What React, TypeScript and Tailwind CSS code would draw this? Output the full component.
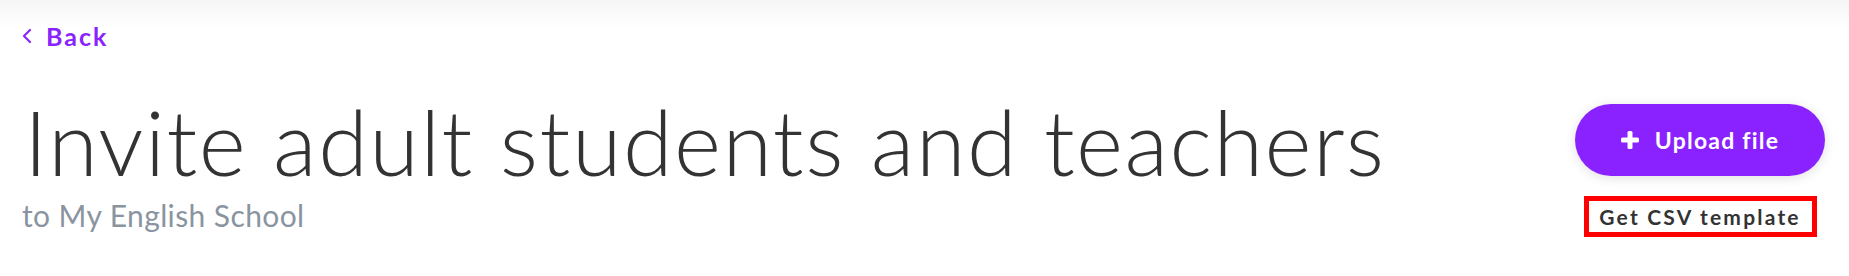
import React from "react";

function PlusIcon() {
  return (
    <svg width="18" height="18" viewBox="0 0 18 18" aria-hidden="true">
      <rect x="6.5" y="0" width="5" height="18" rx="1.5" fill="#ffffff" />
      <rect x="0" y="6.5" width="18" height="5" rx="1.5" fill="#ffffff" />
    </svg>
  );
}

function ChevronLeft() {
  return (
    <svg width="10" height="14" viewBox="0 0 10 14" aria-hidden="true">
      <path d="M8 1 L2 7 L8 13" fill="none" stroke="#8a24ff" strokeWidth="2.2" strokeLinecap="round" strokeLinejoin="round" />
    </svg>
  );
}

export default function App() {
  return (
    <div
      className="w-[1849px] h-[276px] bg-[linear-gradient(to_bottom,#f6f6f6_0px,#ffffff_28px)] px-6 pt-6 text-[#333333]"
      style={{ fontFamily: "Lato, 'Open Sans', sans-serif" }}
    >
      <div className="flex items-center gap-[14px] h-6 leading-6 text-[25px] font-bold tracking-[2px] text-[#8a24ff] -ml-[2px]">
        <ChevronLeft />
        <span>Back</span>
      </div>
      <div className="mt-12 flex justify-between items-start">
        <div className="flex flex-col">
          <h1 className="text-[90px] leading-none font-light text-[#333333] tracking-[1.5px]">
            Invite adult students and teachers
          </h1>
          <p className="mt-[14px] text-[30px] leading-none text-[#8a94a0] tracking-[0.4px] -ml-[2px]">
            to My English School
          </p>
        </div>
        <div className="flex flex-col items-center pt-2">
          <button className="flex items-center justify-center gap-[16px] w-[250px] h-[72px] rounded-full bg-[#8a22ff] text-white text-[23px] font-bold tracking-[1.2px] shadow-[0_2px_12px_rgba(0,0,0,0.12)]">
            <PlusIcon />
            <span>Upload file</span>
          </button>
          <div className="mt-5 w-[233px] h-[41px] border-[5px] border-[#ff0000] flex items-center justify-center text-[21px] font-bold tracking-[2.2px] text-[#333333]">
            Get CSV template
          </div>
        </div>
      </div>
    </div>
  );
}
